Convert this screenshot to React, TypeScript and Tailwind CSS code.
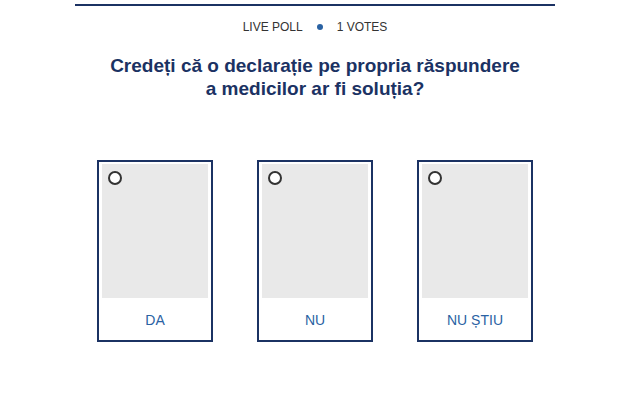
import { useState } from "react";

type Option = { id: string; label: string };

const options: Option[] = [
  { id: "da", label: "DA" },
  { id: "nu", label: "NU" },
  { id: "nu-stiu", label: "NU ȘTIU" },
];

const PollCard = ({
  option,
  selected,
  onSelect,
}: {
  option: Option;
  selected: boolean;
  onSelect: () => void;
}) => (
  <button
    type="button"
    onClick={onSelect}
    className="flex h-[182px] w-[116px] flex-col border-2 border-[#1b3263] bg-white p-[3px] pt-[2px] text-left"
  >
    <div className="relative h-[134px] w-full bg-[#e9e9e9]">
      <span
        className={`absolute left-[6px] top-[7px] h-[14px] w-[14px] rounded-full border-[2.5px] border-[#333] ${
          selected ? "bg-[#2a62a3]" : "bg-white"
        }`}
      />
    </div>
    <div className="flex flex-1 items-center justify-center pt-[6px] text-[14px] text-[#2a62a3]">
      {option.label}
    </div>
  </button>
);

export default function App() {
  const [selected, setSelected] = useState<string | null>(null);

  return (
    <div className="h-[406px] w-[618px] bg-white font-['Liberation_Sans',Arial,sans-serif]">
      <div className="ml-[75px] w-[480px] pt-[4px]">
        <div className="h-[2px] w-full bg-[#1b3263]" />
        <div className="mt-[14px] flex items-center justify-center text-[12px] leading-[14px] text-[#333]">
          <span>LIVE POLL</span>
          <span className="mx-[14px] h-[6px] w-[6px] rounded-full bg-[#2a62a3]" />
          <span>1 VOTES</span>
        </div>
        <h1 className="mt-[20px] text-center text-[19px] font-bold leading-[23px] text-[#1b3263]">
          Credeți că o declarație pe propria răspundere
          <br />a medicilor ar fi soluția?
        </h1>
        <div className="mt-[60px] flex justify-center gap-[44px]">
          {options.map((option) => (
            <PollCard
              key={option.id}
              option={option}
              selected={selected === option.id}
              onSelect={() => setSelected(option.id)}
            />
          ))}
        </div>
      </div>
    </div>
  );
}
